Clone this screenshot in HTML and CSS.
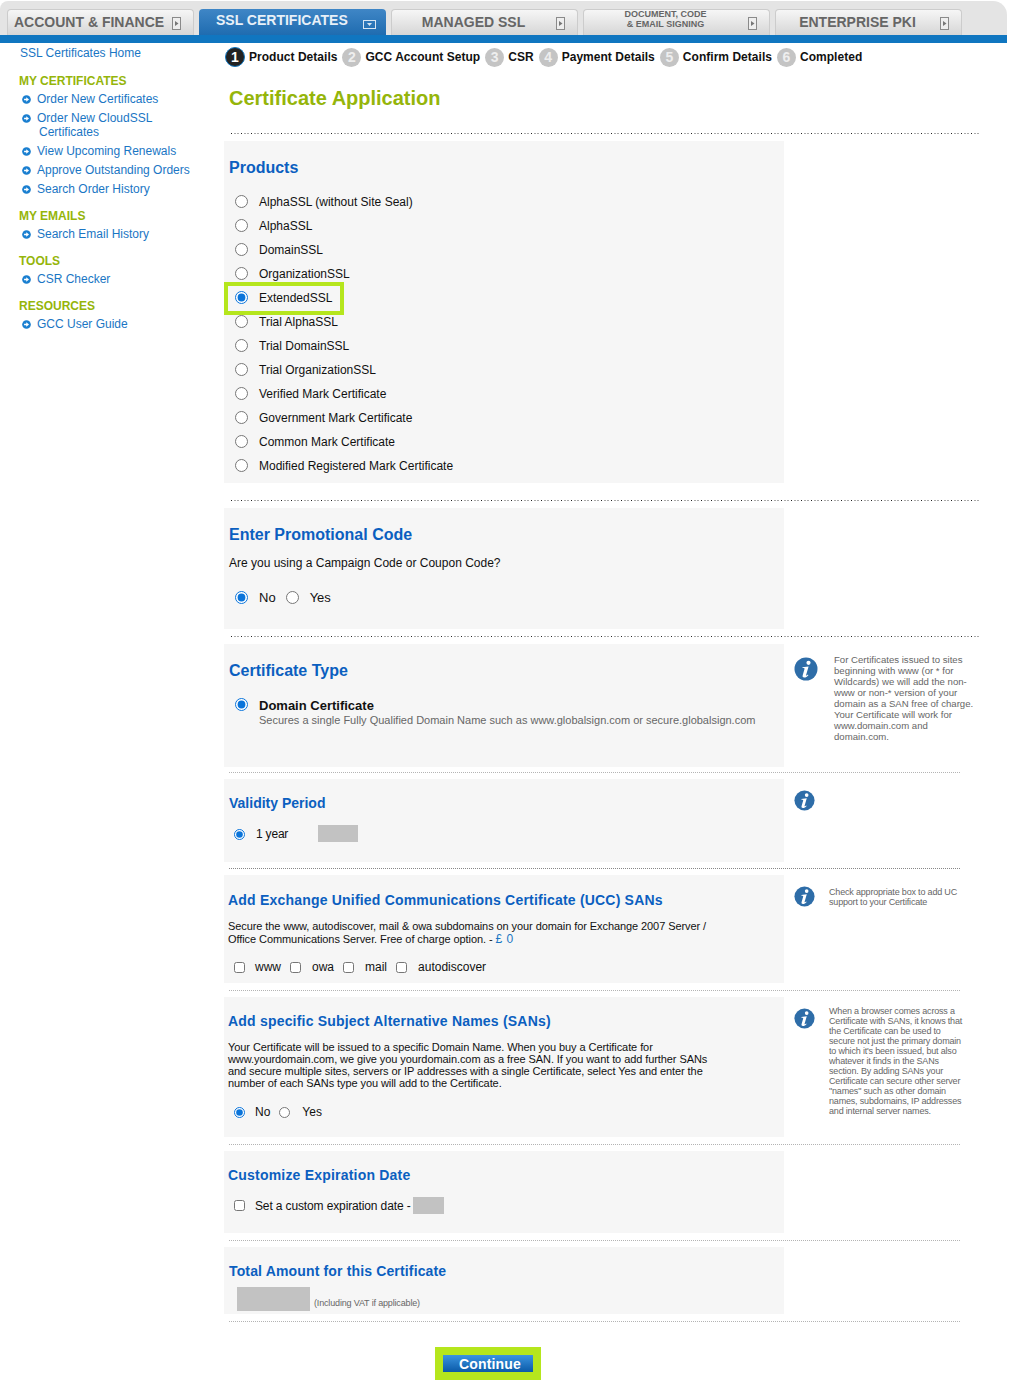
FILE: index.html
```html
<!DOCTYPE html>
<html>
<head>
    <meta charset="utf-8">
    <title>Certificate Application</title>
    <link rel="stylesheet" href="styles.css">
</head>
<body>
    <svg class="defs" width="0" height="0">
        <symbol id="tab-arrow" viewBox="0 0 9 13">
            <rect x="0.5" y="0.5" width="8" height="12" fill="#eee" stroke="#8a8a8a"/>
            <path d="M3 4l3.5 2.5L3 9z" fill="#777"/>
        </symbol>
        <symbol id="tab-down" viewBox="0 0 13 9">
            <rect x="0.5" y="0.5" width="12" height="8" fill="none" stroke="#d8e6f3"/>
            <path d="M4 3h5L6.500 6z" fill="#d8e6f3"/>
        </symbol>
        <symbol id="bullet" viewBox="0 0 10 10">
            <circle cx="5" cy="5" r="4.800" fill="#1a7fd0"/>
            <path d="M2.300 4.200h2.400V2.500L7.800 5 4.700 7.500V5.800H2.300z" fill="#fff"/>
        </symbol>
        <symbol id="info" viewBox="0 0 24 24">
            <circle cx="12" cy="12" r="11.500" fill="#2e6da8"/>
            <circle cx="14.500" cy="5.800" r="2.100" fill="#fff"/>
            <path d="M8.300 10.200l6.300-.8-2.500 8.600c-.2.700.4.800 1 .3l.8-.7.500.6c-1.400 1.600-2.700 2.300-4.200 2.300-1.300 0-1.900-.8-1.500-2.200l1.800-6.300c.2-.7-.2-.9-1.800-.9z" fill="#fff"/>
        </symbol>
    </svg>

    <div class="header">
        <div class="tab"><span class="tab-name">ACCOUNT &amp; FINANCE</span><svg class="tab-icon"><use href="#tab-arrow"/></svg></div>
        <div class="tab tab-active"><span class="tab-name">SSL CERTIFICATES</span><svg class="tab-icon-down"><use href="#tab-down"/></svg></div>
        <div class="tab"><span class="tab-name tab-center">MANAGED SSL</span><svg class="tab-icon"><use href="#tab-arrow"/></svg></div>
        <div class="tab"><span class="tab-name tab-center tab-small">DOCUMENT, CODE<br>&amp; EMAIL SIGNING</span><svg class="tab-icon"><use href="#tab-arrow"/></svg></div>
        <div class="tab"><span class="tab-name tab-center">ENTERPRISE PKI</span><svg class="tab-icon"><use href="#tab-arrow"/></svg></div>
    </div>
    <div class="blue-bar"></div>

    <div class="page">
        <div class="sidebar">
            <a class="home-link">SSL Certificates Home</a>

            <h4>MY CERTIFICATES</h4>
            <ul>
                <li><svg><use href="#bullet"/></svg><a>Order New Certificates</a></li>
                <li><svg><use href="#bullet"/></svg><a>Order New CloudSSL<br><span class="wrap">Certificates</span></a></li>
                <li><svg><use href="#bullet"/></svg><a>View Upcoming Renewals</a></li>
                <li><svg><use href="#bullet"/></svg><a>Approve Outstanding Orders</a></li>
                <li><svg><use href="#bullet"/></svg><a>Search Order History</a></li>
            </ul>

            <h4>MY EMAILS</h4>
            <ul>
                <li><svg><use href="#bullet"/></svg><a>Search Email History</a></li>
            </ul>

            <h4>TOOLS</h4>
            <ul>
                <li><svg><use href="#bullet"/></svg><a>CSR Checker</a></li>
            </ul>

            <h4>RESOURCES</h4>
            <ul>
                <li><svg><use href="#bullet"/></svg><a>GCC User Guide</a></li>
            </ul>
        </div>

        <div class="main">
            <div class="steps">
                <span class="step-num step-current">1</span><span class="step-name">Product Details</span>
                <span class="step-num">2</span><span class="step-name">GCC Account Setup</span>
                <span class="step-num">3</span><span class="step-name">CSR</span>
                <span class="step-num">4</span><span class="step-name">Payment Details</span>
                <span class="step-num">5</span><span class="step-name">Confirm Details</span>
                <span class="step-num">6</span><span class="step-name">Completed</span>
            </div>

            <h1>Certificate Application</h1>
            <div class="dots dots-long first-dots"></div>

            <div class="row">
                <div class="panel products">
                    <h2>Products</h2>
                    <div class="product-list">
                        <label><input type="radio" name="product">AlphaSSL (without Site Seal)</label>
                        <label><input type="radio" name="product">AlphaSSL</label>
                        <label><input type="radio" name="product">DomainSSL</label>
                        <label><input type="radio" name="product">OrganizationSSL</label>
                        <label class="picked"><input type="radio" name="product" checked>ExtendedSSL</label>
                        <label><input type="radio" name="product">Trial AlphaSSL</label>
                        <label><input type="radio" name="product">Trial DomainSSL</label>
                        <label><input type="radio" name="product">Trial OrganizationSSL</label>
                        <label><input type="radio" name="product">Verified Mark Certificate</label>
                        <label><input type="radio" name="product">Government Mark Certificate</label>
                        <label><input type="radio" name="product">Common Mark Certificate</label>
                        <label><input type="radio" name="product">Modified Registered Mark Certificate</label>
                    </div>
                </div>
            </div>
            <div class="dots dots-long products-dots"></div>

            <div class="row">
                <div class="panel promo">
                    <h2>Enter Promotional Code</h2>
                    <p class="promo-text">Are you using a Campaign Code or Coupon Code?</p>
                    <div class="choice promo-choice">
                        <label><input type="radio" name="promo" checked>No</label>
                        <label><input type="radio" name="promo">Yes</label>
                    </div>
                </div>
            </div>
            <div class="dots dots-long"></div>

            <div class="row">
                <div class="panel cert-type">
                    <h2>Certificate Type</h2>
                    <div class="type-option">
                        <input type="radio" name="type" checked>
                        <div>
                            <strong>Domain Certificate</strong>
                            <p>Secures a single Fully Qualified Domain Name such as www.globalsign.com or secure.globalsign.com</p>
                        </div>
                    </div>
                </div>
                <div class="note note-type">
                    <svg class="info-big"><use href="#info"/></svg>
                    <p>For Certificates issued to sites beginning with www (or * for Wildcards) we will add the non-www or non-* version of your domain as a SAN free of charge. Your Certificate will work for www.domain.com and domain.com.</p>
                </div>
            </div>
            <div class="dots dots-type"></div>

            <div class="row">
                <div class="panel validity">
                    <h3>Validity Period</h3>
                    <div class="choice validity-choice">
                        <label><input type="radio" name="period" checked>1 year</label>
                        <span class="redact redact-price"></span>
                    </div>
                </div>
                <div class="note note-validity">
                    <svg class="info-small"><use href="#info"/></svg>
                </div>
            </div>
            <div class="dots dots-validity"></div>

            <div class="row">
                <div class="panel ucc">
                    <h3 class="spaced">Add Exchange Unified Communications Certificate (UCC) SANs</h3>
                    <p class="body-text"><span class="line">Secure the www, autodiscover, mail &amp; owa subdomains on your domain for Exchange 2007 Server /</span>Office Communications Server. Free of charge option. - <span class="price">£ 0</span></p>
                    <div class="choice ucc-choice">
                        <label><input type="checkbox">www</label>
                        <label><input type="checkbox">owa</label>
                        <label><input type="checkbox">mail</label>
                        <label><input type="checkbox">autodiscover</label>
                    </div>
                </div>
                <div class="note note-small">
                    <svg class="info-small"><use href="#info"/></svg>
                    <p>Check appropriate box to add UC support to your Certificate</p>
                </div>
            </div>
            <div class="dots"></div>

            <div class="row">
                <div class="panel sans">
                    <h3 class="spaced">Add specific Subject Alternative Names (SANs)</h3>
                    <p class="body-text sans-text">Your Certificate will be issued to a specific Domain Name. When you buy a Certificate for www.yourdomain.com, we give you yourdomain.com as a free SAN. If you want to add further SANs and secure multiple sites, servers or IP addresses with a single Certificate, select Yes and enter the number of each SANs type you will add to the Certificate.</p>
                    <div class="choice sans-choice">
                        <label><input type="radio" name="sans" checked>No</label>
                        <label><input type="radio" name="sans">Yes</label>
                    </div>
                </div>
                <div class="note note-small note-sans">
                    <svg class="info-small"><use href="#info"/></svg>
                    <p>When a browser comes across a Certificate with SANs, it knows that the Certificate can be used to secure not just the primary domain to which it's been issued, but also whatever it finds in the SANs section. By adding SANs your Certificate can secure other server "names" such as other domain names, subdomains, IP addresses and internal server names.</p>
                </div>
            </div>
            <div class="dots"></div>

            <div class="row">
                <div class="panel expiry">
                    <h3 class="spaced">Customize Expiration Date</h3>
                    <div class="choice expiry-choice">
                        <label><input type="checkbox">Set a custom expiration date -</label>
                        <span class="redact redact-date"></span>
                    </div>
                </div>
            </div>
            <div class="dots"></div>

            <div class="row">
                <div class="panel total">
                    <h3 class="total-title">Total Amount for this Certificate</h3>
                    <div class="total-line">
                        <span class="redact redact-total"></span>
                        <span class="vat">(Including VAT if applicable)</span>
                    </div>
                </div>
            </div>
            <div class="dots"></div>

            <div class="actions">
                <button type="button">Continue</button>
            </div>
        </div>
    </div>
</body>
</html>
```

FILE: styles.css
```css
*{
    box-sizing: border-box;
}
body{
    margin: 0;
    background: #fff;
    color: #111;
    font-family: "Liberation Sans", Arial, sans-serif;
    font-size: 12px;
}
.defs{
    position: absolute;
}

/* top tabs */
.header{
    width: 1007px;
    height: 34px;
    margin-top: 1px;
    padding: 8px 0 0 7px;
    display: flex;
    gap: 5px;
    background: #e4e4e4;
    border-radius: 8px 14px 0 0;
}
.tab{
    width: 187px;
    height: 26px;
    display: flex;
    align-items: center;
    padding: 0 7px 0 6px;
    border: 1px solid #ccc;
    border-bottom: 0;
    border-radius: 4px 4px 0 0;
    background: linear-gradient(#f6f6f6, #d6d6d6);
    color: #666;
}
.tab-name{
    margin-bottom: 2px;
    font-size: 14px;
    font-weight: bold;
    white-space: nowrap;
}
.tab-center{
    flex: 1;
    text-align: center;
}
.tab-small{
    margin-bottom: 7px;
    font-size: 9px;
    line-height: 10px;
}
.tab-icon{
    width: 9px;
    height: 13px;
    margin: 1px 5px 0 auto;
    flex: none;
}
.tab-center + .tab-icon{
    margin-left: 7px;
}
.tab-active{
    border: 0;
    padding: 0 0 5px 17px;
    background: linear-gradient(#3f86c6, #1f6cb0);
    color: #e8f0f8;
}
.tab-active .tab-name{
    margin-bottom: 0;
}
.tab-icon-down{
    width: 13px;
    height: 9px;
    margin: 9px 0 0 15px;
}
.blue-bar{
    width: 1007px;
    height: 8px;
    background: #1076c0;
}

.page{
    display: flex;
    align-items: flex-start;
}

/* left menu */
.sidebar{
    width: 224px;
    padding: 3px 0 0 19px;
    flex: none;
}
.sidebar a{
    color: #1a76c4;
}
.home-link{
    display: block;
    margin-left: 1px;
    line-height: 14px;
}
.sidebar h4{
    margin: 0 0 4px;
    color: #95b50a;
    font-size: 12px;
    line-height: 14px;
    font-weight: bold;
}
.home-link + h4{
    margin-top: 14px;
}
.sidebar ul{
    list-style: none;
    margin: 0 0 13px;
    padding: 0 0 0 3px;
}
.sidebar li{
    display: flex;
    align-items: flex-start;
    line-height: 14px;
    margin-bottom: 5px;
}
.sidebar li svg{
    width: 9px;
    height: 9px;
    margin: 3px 6px 0 0;
    flex: none;
}
.sidebar .wrap{
    padding-left: 2px;
}

/* wizard steps */
.main{
    width: 783px;
}
.steps{
    display: flex;
    align-items: center;
    height: 20px;
    margin-top: 4px;
    padding-left: 1px;
    font-weight: bold;
    white-space: nowrap;
}
.step-num{
    width: 19px;
    height: 19px;
    margin-left: 5px;
    border-radius: 50%;
    background: #c4c4c4;
    color: #eee;
    font-size: 14px;
    line-height: 19px;
    text-align: center;
}
.step-current{
    width: 20px;
    height: 20px;
    margin-left: 0;
    background: #222;
    color: #fff;
    border: 1px solid #1076c0;
    line-height: 18px;
}
.step-name{
    margin-left: 4px;
    color: #111;
    letter-spacing: 0.03px;
}
h1{
    margin: 19px 0 0 5px;
    color: #95b50a;
    font-size: 20px;
    line-height: 24px;
}

.dots{
    width: 731px;
    height: 1px;
    margin: 7px 0 6px 5px;
    background: repeating-linear-gradient(90deg, #b4b4b4 0 1px, transparent 1px 2px);
}
.dots-type{
    margin-top: 5px;
}
.dots-validity{
    margin-top: 6px;
    background: repeating-linear-gradient(90deg, #888 0 1px, transparent 1px 2px);
}
.dots-long{
    width: 749px;
    margin: 7px 0 7px 7px;
    background: repeating-linear-gradient(90deg, #222 0 1px, transparent 1px 3px, #aaa 3px 5px, transparent 5px 6px, #aaa 6px 8px, transparent 8px 10px);
}
.first-dots{
    margin-top: 23px;
}
.products-dots{
    margin-top: 17px;
}
.row{
    display: flex;
    align-items: flex-start;
}
.panel{
    width: 560px;
    flex: none;
    background: #f6f6f6;
    padding-left: 5px;
}
h2{
    margin: 0;
    color: #0b5fc0;
    font-size: 16px;
    line-height: 20px;
}
h3{
    margin: 0;
    color: #0b5fc0;
    font-size: 14px;
    line-height: 18px;
}
.spaced{
    letter-spacing: 0.2px;
}
input{
    margin: 0;
    flex: none;
    accent-color: #0a74da;
}

/* products */
.products{
    height: 342px;
    padding-top: 17px;
}
.product-list{
    margin-top: 12px;
    display: flex;
    flex-direction: column;
    align-items: flex-start;
}
.product-list label{
    height: 24px;
    display: flex;
    align-items: center;
    padding-left: 6px;
}
.product-list input{
    margin: 0 11px 2px 0;
}
.picked{
    position: relative;
}
.picked::after{
    content: "";
    position: absolute;
    left: -5px;
    top: -4px;
    right: -12px;
    bottom: -5px;
    border: 4px solid #b5e61d;
}

/* radio / check rows */
.choice{
    display: flex;
    align-items: center;
}
.choice label{
    display: flex;
    align-items: center;
}

.promo{
    height: 121px;
    padding-top: 17px;
}
.promo-text{
    margin: 11px 0 0;
    line-height: 14px;
}
.promo-choice{
    margin: 20px 0 0 6px;
    font-size: 13px;
}
.promo-choice input{
    margin-right: 11px;
}
.promo-choice label{
    margin-right: 10px;
}

.cert-type{
    height: 123px;
    padding-top: 17px;
}
.type-option{
    display: flex;
    align-items: flex-start;
    margin: 17px 0 0 6px;
}
.type-option input{
    margin: 0 11px 0 0;
}
.type-option strong{
    display: block;
    font-size: 13px;
    line-height: 16px;
    color: #111;
}
.type-option p{
    margin: 0;
    color: #666;
    font-size: 11px;
    line-height: 12px;
    white-space: nowrap;
}

.note{
    display: flex;
    align-items: flex-start;
    color: #666;
    font-size: 9.600px;
    line-height: 11px;
}
.note p{
    margin: 0;
}
.info-big{
    width: 24px;
    height: 24px;
    flex: none;
}
.info-small{
    width: 21px;
    height: 21px;
    flex: none;
}
.note-type{
    padding: 13px 0 0 10px;
}
.note-type p{
    width: 140px;
    margin: -3px 0 0 16px;
}
.note-validity{
    padding: 11px 0 0 10px;
}
.note-small{
    padding: 11px 0 0 10px;
    font-size: 9px;
    line-height: 10px;
    letter-spacing: -0.180px;
}
.note-small p{
    width: 136px;
    margin: 1px 0 0 14px;
}
.note-sans p{
    margin-top: -2px;
}

.validity{
    height: 83px;
    padding-top: 15px;
}
.validity-choice{
    margin: 13px 0 0 4px;
}
.validity-choice input{
    margin-left: 1px;
    margin-right: 11px;
    width: 11px;
    height: 11px;
}
.validity-choice label{
    width: 85px;
    padding-top: 1px;
    letter-spacing: -0.2px;
}
.redact{
    display: inline-block;
    background: #c2c2c2;
}
.redact-price{
    width: 40px;
    height: 17px;
}
.redact-date{
    width: 31px;
    height: 17px;
}
.redact-total{
    width: 73px;
    height: 24px;
}

.ucc{
    height: 108px;
    padding: 16px 0 0 4px;
}
.body-text{
    margin: 11px 0 0;
    width: 490px;
    font-size: 11px;
    line-height: 13px;
    letter-spacing: -0.08px;
}
.sans-text{
    line-height: 12px;
}
.line{
    display: block;
}
.price{
    color: #1a76c4;
    font-size: 12px;
    line-height: 12px;
    letter-spacing: 0.5px;
}
.ucc-choice{
    margin: 14px 0 0 6px;
}
.ucc-choice input{
    margin-right: 11px;
    width: 11px;
    height: 11px;
}
.ucc-choice label{
    margin-right: 9px;
}
.ucc-choice label:first-child input{
    margin-right: 10px;
}

.sans{
    height: 140px;
    padding: 15px 0 0 4px;
}
.sans-choice{
    margin: 16px 0 0 6px;
}
.sans-choice input{
    width: 11px;
    height: 11px;
    margin-right: 10px;
}
.sans-choice label{
    margin-right: 9px;
}
.sans-choice label + label input{
    margin-right: 12px;
}

.expiry{
    height: 82px;
    padding: 15px 0 0 4px;
}
.expiry-choice{
    margin: 13px 0 0 6px;
}
.expiry-choice input{
    width: 11px;
    height: 11px;
    margin-right: 10px;
}
.expiry-choice label{
    margin-right: 2px;
    letter-spacing: -0.13px;
}

.total{
    height: 67px;
    padding-top: 15px;
}
.total-title{
    letter-spacing: 0.15px;
}
.total-line{
    display: flex;
    align-items: flex-end;
    margin: 7px 0 0 8px;
}
.vat{
    margin: 0 0 2px 4px;
    color: #666;
    font-size: 9px;
    line-height: 12px;
    letter-spacing: -0.16px;
}

.actions{
    margin: 25px 0 0 211px;
    width: 106px;
    height: 33px;
    padding: 8px;
    background: #b5e61d;
}
.actions button{
    display: block;
    width: 90px;
    height: 17px;
    padding: 1px 0 0 4px;
    border: 0;
    background: linear-gradient(#3b94e0, #0a5aa8);
    color: #fff;
    font-family: "Liberation Sans", Arial, sans-serif;
    font-size: 14px;
    font-weight: bold;
    letter-spacing: 0.15px;
    line-height: 16px;
}
```
